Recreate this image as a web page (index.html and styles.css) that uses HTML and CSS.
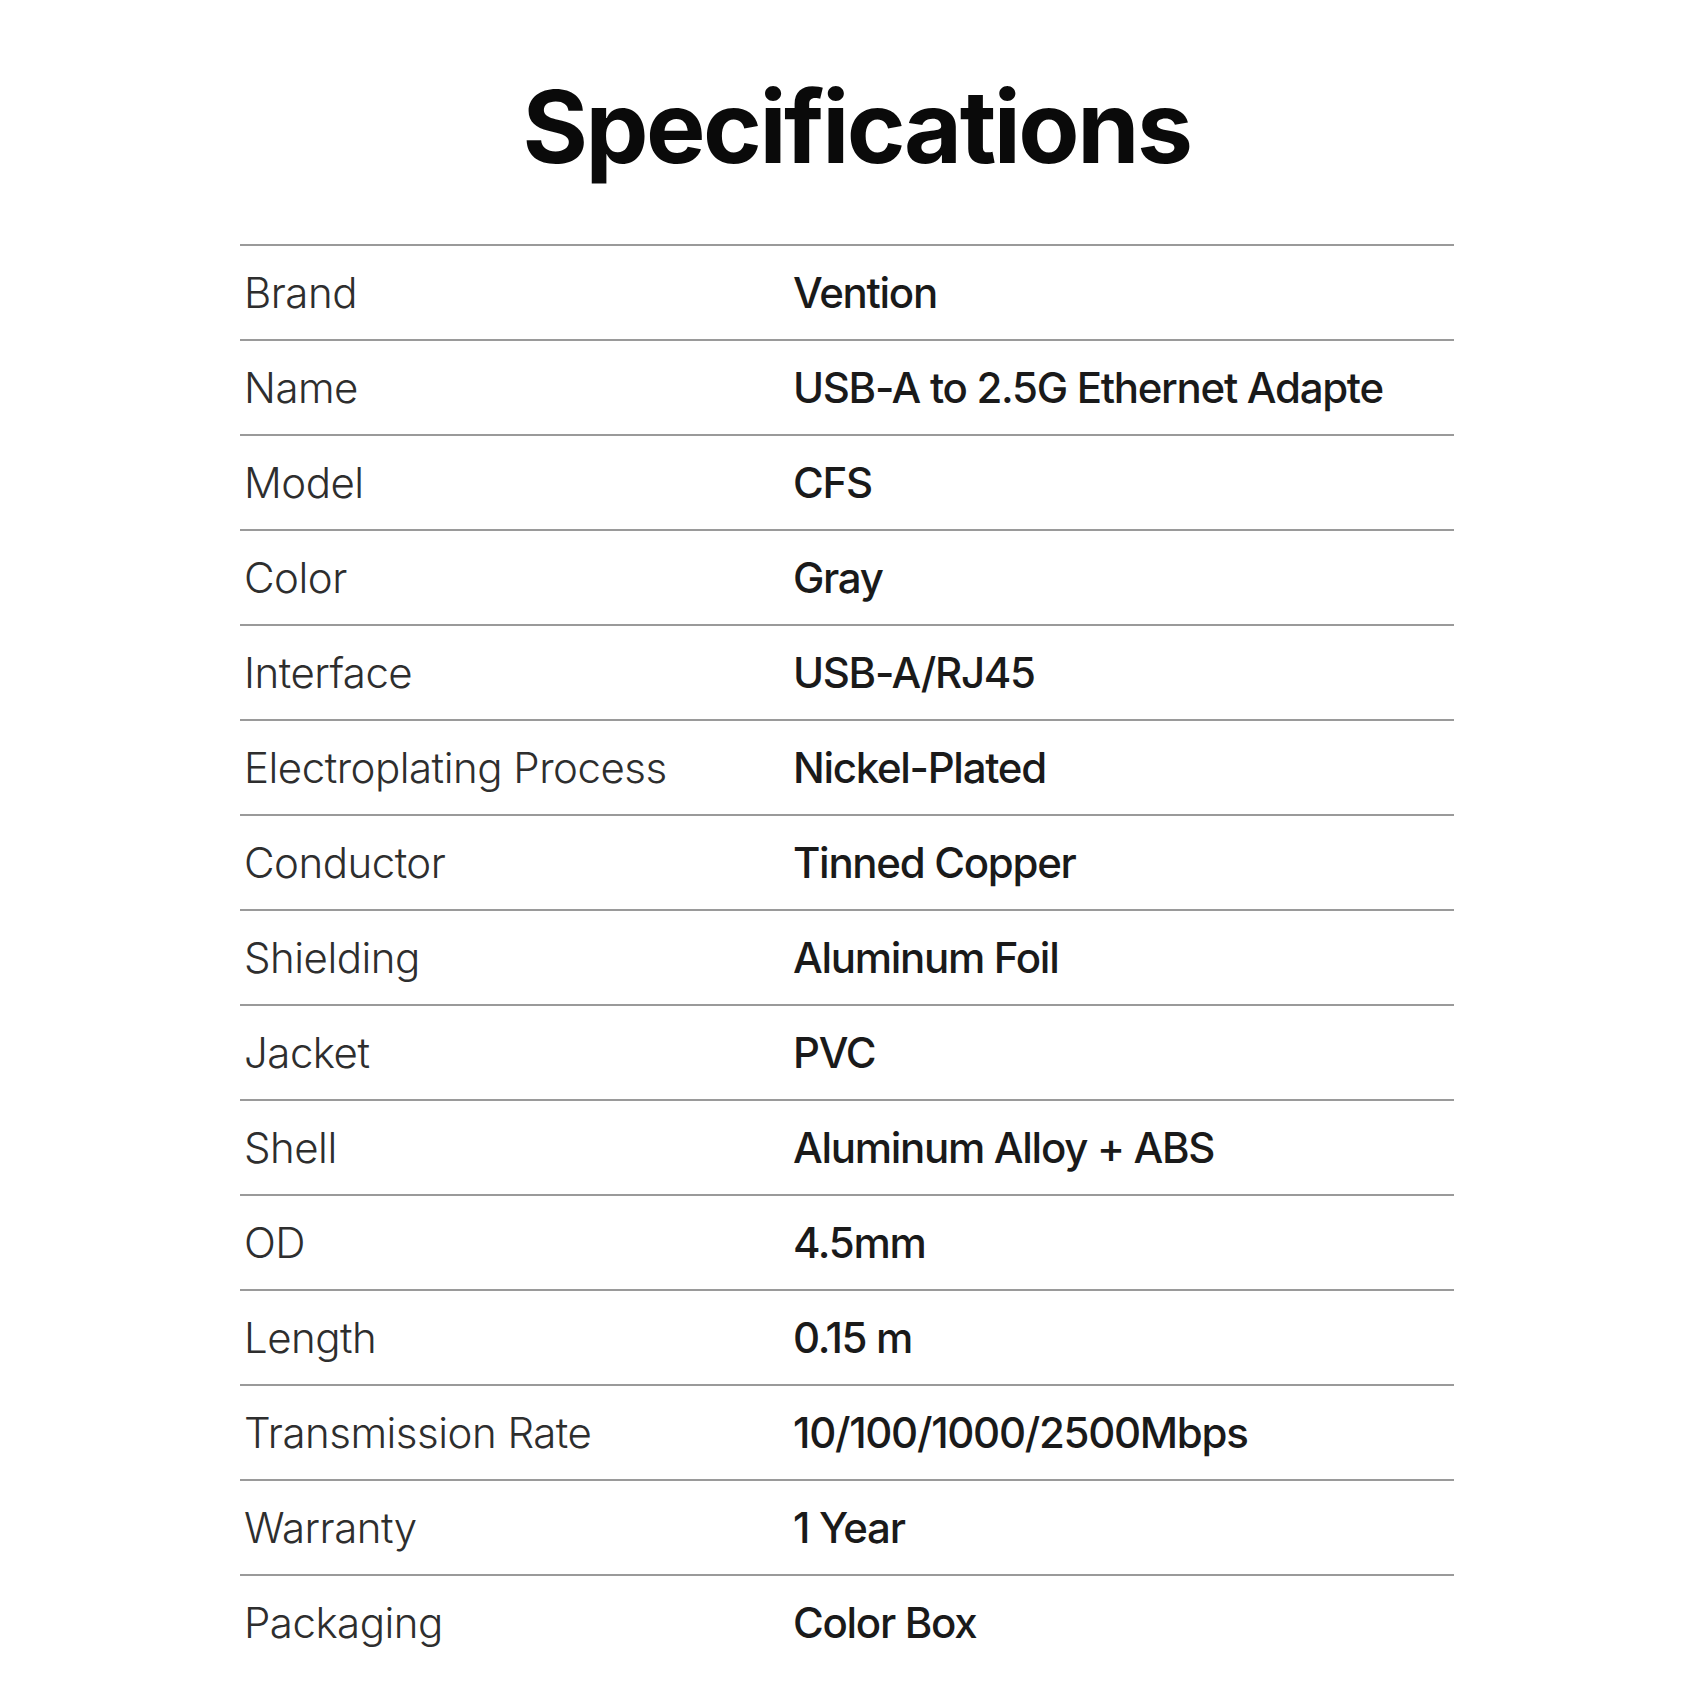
FILE: index.html
```html
<!DOCTYPE html>
<html lang="en">
<head>
<meta charset="utf-8">
<title>Specifications</title>
<link rel="stylesheet" href="styles.css">
</head>
<body>
<div class="page">
  <h1 class="title">Specifications</h1>
  <div class="specs">
    <div class="row"><div class="label">Brand</div><div class="value">Vention</div></div>
    <div class="row"><div class="label">Name</div><div class="value">USB-A to 2.5G Ethernet Adapte</div></div>
    <div class="row"><div class="label">Model</div><div class="value">CFS</div></div>
    <div class="row"><div class="label">Color</div><div class="value">Gray</div></div>
    <div class="row"><div class="label">Interface</div><div class="value">USB-A/RJ45</div></div>
    <div class="row"><div class="label">Electroplating Process</div><div class="value">Nickel-Plated</div></div>
    <div class="row"><div class="label">Conductor</div><div class="value">Tinned Copper</div></div>
    <div class="row"><div class="label">Shielding</div><div class="value">Aluminum Foil</div></div>
    <div class="row"><div class="label">Jacket</div><div class="value">PVC</div></div>
    <div class="row"><div class="label">Shell</div><div class="value">Aluminum Alloy + ABS</div></div>
    <div class="row"><div class="label">OD</div><div class="value">4.5mm</div></div>
    <div class="row"><div class="label">Length</div><div class="value">0.15 m</div></div>
    <div class="row"><div class="label">Transmission Rate</div><div class="value">10/100/1000/2500Mbps</div></div>
    <div class="row"><div class="label">Warranty</div><div class="value">1 Year</div></div>
    <div class="row"><div class="label">Packaging</div><div class="value">Color Box</div></div>
  </div>
</div>
</body>
</html>
```
FILE: styles.css
```css
html, body {
  margin: 0;
  padding: 0;
  background: #ffffff;
}
.page {
  width: 1700px;
  height: 1700px;
  overflow: hidden;
  font-family: Inter, "Noto Sans", sans-serif;
}
.title {
  margin: 77px 0 0 0;
  padding-left: 13px;
  font-size: 100px;
  line-height: 100px;
  font-weight: 700;
  text-align: center;
  color: #0a0a0a;
  letter-spacing: -2.5px;
}
.specs {
  margin: 67px 0 0 240px;
  width: 1214px;
}
.row {
  display: flex;
  align-items: center;
  height: 93px;
  border-top: 2px solid #9a9a9a;
}
.label {
  width: 549px;
  padding-left: 4px;
  font-size: 42px;
  font-weight: 300;
  color: #2e2e2e;
  letter-spacing: -0.5px;
}
.value {
  font-size: 42px;
  font-weight: 450;
  color: #1a1a1a;
  letter-spacing: -1.3px;
}
```
